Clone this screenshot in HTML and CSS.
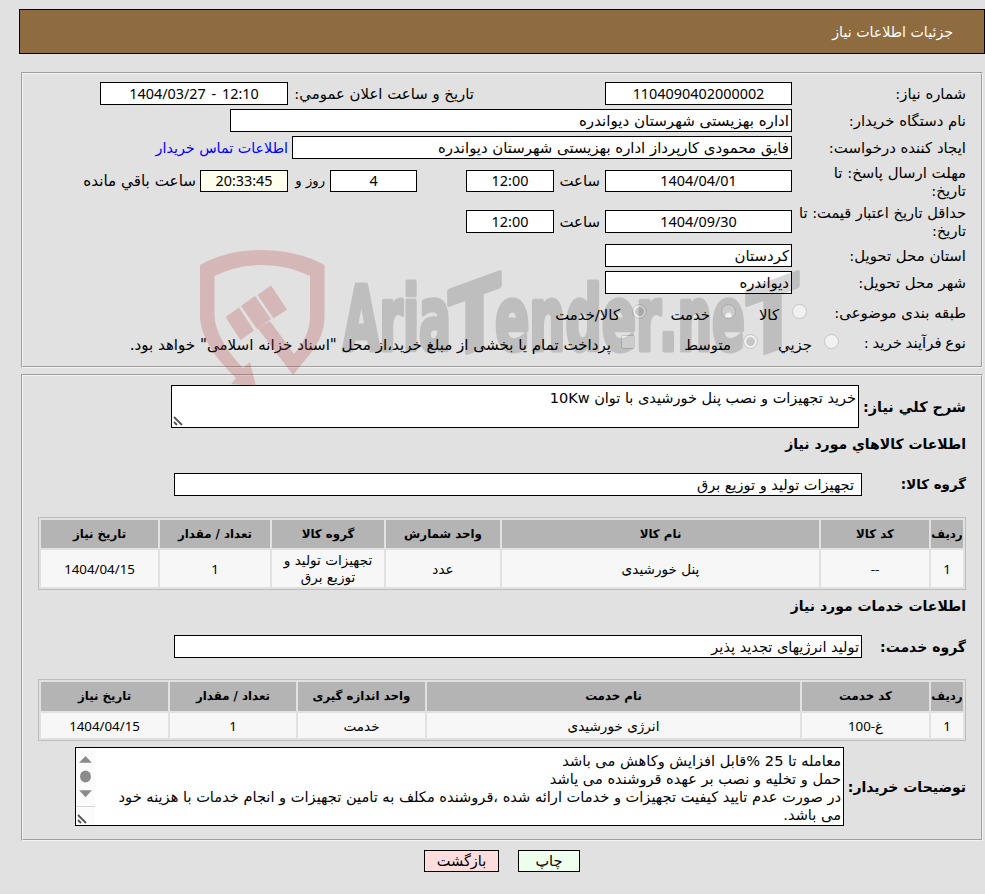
FILE: index.html
```html
<!DOCTYPE html>
<html lang="fa" dir="rtl">
<head>
  <meta charset="UTF-8">
  <title>جزئیات اطلاعات نیاز</title>
  <link rel="stylesheet" href="styles.css">
</head>
<body>

  <div class="header"><span>جزئیات اطلاعات نیاز</span></div>

  <div class="panel info">
    <div class="row">
      <span class="label">شماره نیاز:</span>
      <span class="field num date">1104090402000002</span>
      <span class="text announce">تاریخ و ساعت اعلان عمومي:</span>
      <span class="field num date2" dir="ltr">1404/03/27 - 12:10</span>
    </div>
    <div class="row">
      <span class="label">نام دستگاه خریدار:</span>
      <span class="field start org">اداره بهزیستی شهرستان دیواندره</span>
    </div>
    <div class="row">
      <span class="label">ایجاد کننده درخواست:</span>
      <span class="field start creator">فایق محمودی کارپرداز اداره بهزیستی شهرستان دیواندره</span>
      <a class="contact">اطلاعات تماس خریدار</a>
    </div>
    <div class="row tall">
      <span class="label">مهلت ارسال پاسخ: تا تاریخ:</span>
      <span class="field num date">1404/04/01</span>
      <span class="text hour">ساعت</span>
      <span class="field num time">12:00</span>
      <span class="field num days">4</span>
      <span class="text and">روز و</span>
      <span class="field num time timer">20:33:45</span>
      <span class="text remain">ساعت باقي مانده</span>
    </div>
    <div class="row tall last">
      <span class="label">حداقل تاریخ اعتبار قیمت: تا<br>تاریخ:</span>
      <span class="field num date">1404/09/30</span>
      <span class="text hour">ساعت</span>
      <span class="field num time">12:00</span>
    </div>
    <div class="row">
      <span class="label">استان محل تحویل:</span>
      <span class="field start date">کردستان</span>
    </div>
    <div class="row">
      <span class="label">شهر محل تحویل:</span>
      <span class="field start date">دیواندره</span>
    </div>
    <div class="row options">
      <span class="label">طبقه بندی موضوعی:</span>
      <i class="radio"></i><span class="option w-goods">کالا</span>
      <i class="radio"></i><span class="option w-service">خدمت</span>
      <i class="radio checked"></i><span class="option">کالا/خدمت</span>
    </div>
    <div class="row options process">
      <span class="label">نوع فرآیند خرید :</span>
      <i class="radio"></i><span class="option w-small">جزیي</span>
      <i class="radio checked"></i><span class="option w-medium">متوسط</span>
      <i class="check"></i><span class="option pay">پرداخت تمام یا بخشی از مبلغ خرید،از محل "اسناد خزانه اسلامی" خواهد بود.</span>
    </div>
  </div>

  <div class="panel need">
    <div class="line first">
      <b class="title">شرح کلي نیاز:</b>
      <div class="area summary">خرید تجهیزات و نصب پنل خورشیدی با توان 10Kw
        <svg class="grip" width="10" height="10" viewBox="0 0 10 10"><path d="M1 1l8 8M1 6l3 3" /></svg>
      </div>
    </div>
    <b class="heading">اطلاعات کالاهاي مورد نیاز</b>
    <div class="line group">
      <b class="title short">گروه کالا:</b>
      <span class="field start gfield indent">تجهیزات تولید و توزیع برق</span>
    </div>
    <table class="grid goods-grid">
      <colgroup><col class="c32"><col class="c108"><col class="c317"><col class="c114"><col class="c112"><col class="c110"><col class="c117"></colgroup>
      <tr><th>ردیف</th><th>کد کالا</th><th>نام کالا</th><th>واحد شمارش</th><th>گروه کالا</th><th>تعداد / مقدار</th><th>تاریخ نیاز</th></tr>
      <tr><td class="num">1</td><td class="num">--</td><td>پنل خورشیدی</td><td>عدد</td><td>تجهیزات تولید و توزیع برق</td><td class="num">1</td><td class="num">1404/04/15</td></tr>
    </table>
    <b class="heading">اطلاعات خدمات مورد نیاز</b>
    <div class="line group">
      <b class="title">گروه خدمت:</b>
      <span class="field start gfield">تولید انرژیهای تجدید پذیر</span>
    </div>
    <table class="grid service-grid">
      <colgroup><col class="c32"><col class="c127"><col class="c373"><col class="c127"><col class="c126"><col class="c127"></colgroup>
      <tr><th>ردیف</th><th>کد خدمت</th><th>نام خدمت</th><th>واحد اندازه گیری</th><th>تعداد / مقدار</th><th>تاریخ نیاز</th></tr>
      <tr><td class="num">1</td><td class="num">غ-100</td><td>انرژی خورشیدی</td><td>خدمت</td><td class="num">1</td><td class="num">1404/04/15</td></tr>
    </table>
    <div class="line notes-line">
      <b class="title">توضیحات خریدار:</b>
      <div class="area notes">
        <p>معامله تا 25 %قابل افزایش وکاهش می باشد</p>
        <p>حمل و تخلیه و نصب بر عهده قروشنده می یاشد</p>
        <p>در صورت عدم تایید کیفیت تجهیزات و خدمات ارائه شده ،قروشنده مکلف به تامین تجهیزات و انجام خدمات با هزینه خود</p>
        <p>می باشد.</p>
        <div class="scroll">
          <svg width="19" height="58" viewBox="0 0 19 58"><path d="M3 14l6.500-7 6.500 7zM3 42l6.500 7 6.500-7z"/><rect x="4" y="22" width="11" height="12" rx="5.500"/></svg>
        </div>
        <svg class="grip" width="10" height="10" viewBox="0 0 10 10"><path d="M1 1l8 8M1 6l3 3" /></svg>
      </div>
    </div>
  </div>

  <div class="buttons">
    <button class="print">چاپ</button>
    <button class="back">بازگشت</button>
  </div>

  <svg class="watermark" width="610" height="146" viewBox="195 245 610 146">
    <g class="shield">
      <path d="M200 265Q227 250 262 250T324.500 265V318Q324 334 314 349L293 375 257.500 328 270 321 294 354Q310 336 310 316V276Q287 265 262 265T214.500 276V316Q216 340 243 368L250 362 256 386 231 384 236 378Q202 346 200 318Z"/>
      <path d="M225.500 317l13.500-9.500 15 23-13.500 9.500zM241 306l14-10 16 23-14 10zM257.500 295l13.500-9.500 16 24-13.500 9z"/>
    </g>
    <g class="brand" direction="ltr">
      <text x="343" y="350" font-size="89" textLength="108" lengthAdjust="spacingAndGlyphs">Aria</text>
      <text x="-25" y="0" font-size="93" textLength="51" lengthAdjust="spacingAndGlyphs" transform="translate(474 350) skewY(-20)">T</text>
      <text x="495" y="350" font-size="89" textLength="166" lengthAdjust="spacingAndGlyphs">ender</text>
      <text x="659" y="350" font-size="89" textLength="86" lengthAdjust="spacingAndGlyphs">.ne</text>
      <text x="-25" y="0" font-size="93" textLength="51" lengthAdjust="spacingAndGlyphs" transform="translate(772 350) skewY(-20)">T</text>
    </g>
  </svg>

</body>
</html>
```
FILE: styles.css
```css
* {
  box-sizing: border-box;
}

body {
  position: relative;
  width: 985px;
  height: 894px;
  margin: 0;
  padding-top: 9px;
  overflow: hidden;
  background: #e1e1e1;
  color: #000;
  font-family: "DejaVu Sans", sans-serif;
  font-size: 14.5px;
  line-height: 18px;
}

.header {
  display: flex;
  align-items: center;
  height: 45px;
  margin-left: 19px;
  padding-right: 31px;
  border: 1px solid #000;
  background: #8f6c40;
  color: #fff;
  font-size: 14.2px;
}

.panel {
  width: 962px;
  margin-right: 2px;
  padding-right: 15px;
  border: 2px groove #f2f2f2;
}

.info {
  height: 296px;
  margin-top: 18px;
  padding-top: 6px;
  font-size: 14.9px;
}

.need {
  height: 467px;
  margin-top: 6px;
}

.row {
  display: flex;
  align-items: center;
  height: 27px;
  white-space: nowrap;
}

.tall {
  height: 40px;
}

.last {
  height: 41px;
}

.label {
  flex: none;
  width: 174px;
}

.tall .label {
  padding-top: 1px;
  padding-left: 4px;
  white-space: normal;
}

.last .label {
  padding-left: 0;
  font-size: 14.6px;
  white-space: nowrap;
}

.field {
  display: flex;
  flex: none;
  align-items: center;
  justify-content: center;
  height: 23px;
  border: 1px solid #000;
  background: #fff;
}

.tall .field {
  height: 22px;
}

.last .field {
  height: 23px;
}

.num {
  font-family: "Noto Sans", "DejaVu Sans", sans-serif;
  font-size: 14.4px;
}

.start {
  justify-content: flex-start;
  padding: 0 2px;
}

.date {
  width: 187px;
}

.date2 {
  width: 188px;
  word-spacing: 2px;
}

.org {
  width: 562px;
  font-size: 15.1px;
}

.creator {
  width: 500px;
}

.time {
  width: 88px;
}

.days {
  width: 87px;
  margin-right: 49px;
}

.timer {
  background: #ffffee;
}

.announce {
  width: 186px;
  margin-right: 131px;
}

.hour {
  width: 46px;
  margin-right: 5px;
}

.and {
  width: 37px;
  margin-right: 5px;
  font-size: 13.2px;
}

.remain {
  margin-right: 4px;
  font-size: 15.2px;
}

.contact {
  margin-right: 4px;
  color: #00f;
  font-size: 14.3px;
}

.options {
  height: 33px;
}

.process {
  height: 30px;
  margin-top: -1px;
}

.options .label {
  width: 159px;
}

.process .label {
  width: 127px;
  word-spacing: -1px;
}

.radio,
.check {
  flex: none;
  width: 15px;
  height: 15px;
  margin-top: -3px;
  border: 1px solid #c6c6c6;
  border-radius: 50%;
  background: #f1f1f1;
}

.check {
  width: 14px;
  height: 14px;
  border-radius: 2px;
}

.checked {
  padding: 2px;
  background: #c6c6c6 content-box;
  box-shadow: inset 0 0 0 2px #f1f1f1;
}

.option {
  margin-right: 12px;
  padding-top: 4px;
}

.w-goods {
  width: 43px;
  margin-right: 13px;
}

.w-service {
  width: 63px;
  margin-right: 11px;
}

.w-small {
  width: 54px;
}

.w-medium {
  width: 96px;
}

.pay {
  margin-right: 10px;
  font-size: 15.1px;
}

.line {
  display: flex;
  align-items: center;
}

.first {
  height: 43px;
  margin-top: 9px;
}

.title {
  flex: none;
  width: 104px;
  font-size: 14px;
  white-space: nowrap;
}

.first .title {
  width: 107px;
  font-size: 14.4px;
}

.short {
  font-size: 13.4px;
}

.area {
  position: relative;
  flex: none;
  padding: 3px 2px;
  border: 1px solid #000;
  background: #fff;
}

.area p {
  margin: 0;
  white-space: nowrap;
}

.summary {
  width: 688px;
  height: 43px;
}

.grip {
  position: absolute;
  bottom: 1px;
  left: 1px;
  fill: none;
  stroke: #555;
  stroke-width: 1.8;
}

.heading {
  display: block;
  height: 18px;
  margin-top: 7px;
  font-size: 14px;
}

.group {
  height: 23px;
  margin-top: 20px;
}

.gfield {
  width: 688px;
}

.indent {
  padding-right: 7px;
}

.grid {
  width: 928px;
  margin: 21px 0 0 0;
  border: 1px solid #bdbdbd;
  border-collapse: separate;
  border-spacing: 2px;
  table-layout: fixed;
  font-size: 13.6px;
  line-height: 17px;
  text-align: center;
}

.grid th {
  height: 28px;
  padding: 0;
  background: #b4b4b4;
  font-size: 11.8px;
  white-space: nowrap;
}

.grid td {
  height: 37px;
  padding: 1px 8px 0;
  background: #f7f7f7;
}

.grid .num {
  font-size: 13.3px;
}

.service-grid th {
  height: 29px;
}

.service-grid td {
  height: 25px;
}

.c32 { width: 32px; }
.c108 { width: 108px; }
.c110 { width: 110px; }
.c112 { width: 112px; }
.c114 { width: 114px; }
.c117 { width: 117px; }
.c126 { width: 126px; }
.c127 { width: 127px; }
.c317 { width: 317px; }
.c373 { width: 373px; }

.notes-line {
  margin-top: 6px;
}

.notes-line .title {
  width: 122px;
}

.notes {
  width: 769px;
  height: 79px;
  padding-top: 4px;
  font-size: 14.6px;
}

.scroll {
  position: absolute;
  top: 1px;
  bottom: 0;
  left: 0;
  width: 19px;
  background: #fbfbfb;
}

.scroll svg {
  display: block;
  border-bottom: 1px solid #d5d5d5;
  fill: #8b8b8b;
}

.buttons {
  display: flex;
  gap: 19px;
  margin-top: 9px;
  margin-right: 405px;
}

button {
  height: 22px;
  padding: 0;
  border: 1px solid #000;
  font: inherit;
}

.print {
  width: 62px;
  background: #eeffee;
}

.back {
  width: 75px;
  background: #ffdddd;
}

.watermark {
  position: absolute;
  top: 245px;
  left: 195px;
}

.shield {
  fill: #b3363a;
  opacity: 0.24;
}

.brand {
  fill: #000;
  stroke: #000;
  stroke-width: 5;
  stroke-linejoin: round;
  opacity: 0.15;
  font-family: "DejaVu Sans Condensed", "DejaVu Sans", sans-serif;
  font-weight: bold;
}
```
